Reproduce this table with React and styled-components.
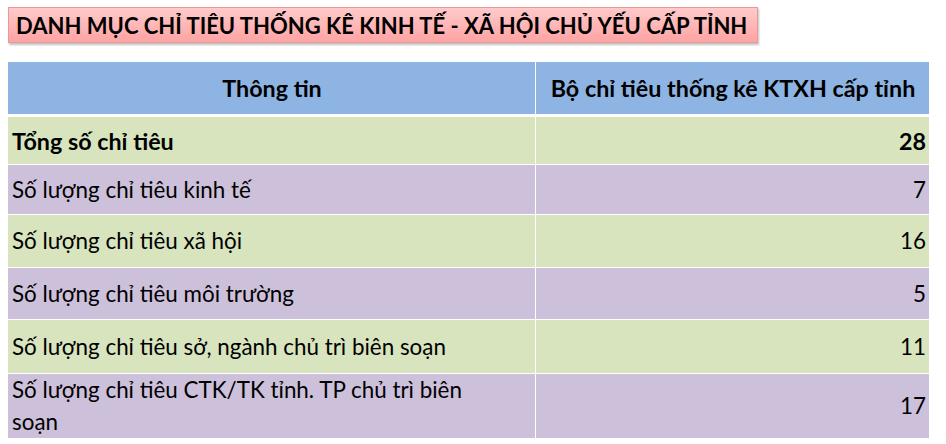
import React from "react";
import styled, { createGlobalStyle } from "styled-components";

const GlobalStyle = createGlobalStyle`
    body {
        margin: 0;
        background: #ffffff;
        font-family: "Lato", "Noto Sans", sans-serif;
        color: #000000;
    }
`;

const Page = styled.div`
    width: 946px;
    height: 444px;
    padding: 7px 0 0 8px;
    box-sizing: border-box;
    display: flex;
    flex-direction: column;
    gap: 19px;
`;

const TitleBox = styled.div`
    align-self: flex-start;
    height: 36px;
    box-sizing: border-box;
    padding: 0 10px 0 7px;
    display: flex;
    align-items: center;
    background: linear-gradient(#ffcaca, #ffa3a3);
    border: 1px solid #e89a9a;
    box-shadow: 1px 2px 2px rgba(0, 0, 0, 0.25);
`;

const Title = styled.h1`
    margin: 0;
    font-size: 22px;
    font-weight: 700;
    white-space: nowrap;
`;

const Table = styled.div`
    width: 921px;
    display: flex;
    flex-direction: column;
    gap: 1px;
`;

const Row = styled.div`
    display: grid;
    grid-template-columns: 527px 1fr;
    column-gap: 1px;
    height: ${({ $h }) => $h}px;
    margin-bottom: ${({ $head }) => ($head ? "2px" : "0")};
`;

const bg = {
    head: "#8eb4e3",
    green: "#d7e4bd",
    purple: "#ccc0da",
};

const Cell = styled.div`
    background: ${({ $tone }) => bg[$tone]};
    display: flex;
    align-items: center;
    justify-content: ${({ $align }) => $align || "flex-start"};
    padding: 0 3px 0 4px;
    font-size: ${({ $bold }) => ($bold ? "23.3px" : "22.4px")};
    line-height: 32px;
    font-weight: ${({ $bold }) => ($bold ? 700 : 400)};
`;

const rows = [
    { label: "Tổng số chỉ tiêu", value: "28", bold: true, tone: "green", h: 47 },
    { label: "Số lượng chỉ tiêu kinh tế", value: "7", tone: "purple", h: 49 },
    { label: "Số lượng chỉ tiêu xã hội", value: "16", tone: "green", h: 52 },
    { label: "Số lượng chỉ tiêu môi trường", value: "5", tone: "purple", h: 51 },
    { label: "Số lượng chỉ tiêu sở, ngành chủ trì biên soạn", value: "11", tone: "green", h: 53 },
    {
        label: (
            <>
                Số lượng chỉ tiêu CTK/TK tỉnh. TP chủ trì biên
                <br />
                soạn
            </>
        ),
        value: "17",
        tone: "purple",
        h: 64,
    },
];

const App = () => {
    return (
        <>
            <GlobalStyle />
            <Page>
                <TitleBox>
                    <Title>DANH MỤC CHỈ TIÊU THỐNG KÊ KINH TẾ - XÃ HỘI CHỦ YẾU CẤP TỈNH</Title>
                </TitleBox>
                <Table>
                    <Row $h={52} $head>
                        <Cell $tone="head" $bold $align="center">Thông tin</Cell>
                        <Cell $tone="head" $bold $align="center">Bộ chỉ tiêu thống kê KTXH cấp tỉnh</Cell>
                    </Row>
                    {rows.map((r, i) => (
                        <Row key={i} $h={r.h}>
                            <Cell $tone={r.tone} $bold={r.bold}>{r.label}</Cell>
                            <Cell $tone={r.tone} $bold={r.bold} $align="flex-end">{r.value}</Cell>
                        </Row>
                    ))}
                </Table>
            </Page>
        </>
    );
};

export default App;
